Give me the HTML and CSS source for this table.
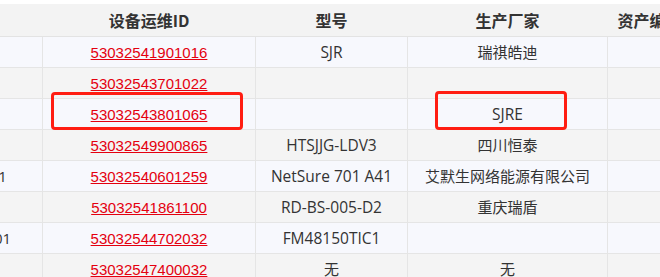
FILE: index.html
```html
<!DOCTYPE html>
<html lang="zh-CN">
<head>
<meta charset="utf-8">
<title>设备列表</title>
<link rel="stylesheet" href="styles.css">
</head>
<body>
<div class="view">
  <table class="grid">
    <colgroup>
      <col class="c0"><col class="c1"><col class="c2"><col class="c3"><col class="c4">
    </colgroup>
    <thead>
      <tr><th>设备名称</th><th>设备运维ID</th><th>型号</th><th>生产厂家</th><th>资产编号</th></tr>
    </thead>
    <tbody>
      <tr class="odd"><td></td><td><a href="#">53032541901016</a></td><td class="model">SJR</td><td>瑞祺皓迪</td><td></td></tr>
      <tr class="even"><td></td><td><a href="#">53032543701022</a></td><td class="model"></td><td></td><td></td></tr>
      <tr class="odd"><td></td><td><a href="#">53032543801065</a></td><td class="model"></td><td class="model">SJRE</td><td></td></tr>
      <tr class="even"><td></td><td><a href="#">53032549900865</a></td><td class="model">HTSJJG-LDV3</td><td>四川恒泰</td><td></td></tr>
      <tr class="odd"><td>通信开关电源1</td><td><a href="#">53032540601259</a></td><td class="model">NetSure 701 A41</td><td>艾默生网络能源有限公司</td><td></td></tr>
      <tr class="even"><td></td><td><a href="#">53032541861100</a></td><td class="model">RD-BS-005-D2</td><td>重庆瑞盾</td><td></td></tr>
      <tr class="odd"><td>通信开关电源01</td><td><a href="#">53032544702032</a></td><td class="model">FM48150TIC1</td><td></td><td></td></tr>
      <tr class="even"><td></td><td><a href="#">53032547400032</a></td><td>无</td><td>无</td><td></td></tr>
    </tbody>
  </table>
  <div class="mark mark-id"></div>
  <div class="mark mark-maker"></div>
</div>
</body>
</html>
```
FILE: styles.css
```css
html, body {
  margin: 0;
  padding: 0;
  background: #ffffff;
}
.view {
  position: relative;
  width: 660px;
  height: 277px;
  overflow: hidden;
  padding-top: 4px;
  box-sizing: border-box;
  font-family: "Open Sans", "Noto Sans CJK SC", sans-serif;
  font-size: 15px;
  color: #333333;
}
.grid {
  margin-left: -128px;
  border-collapse: collapse;
  table-layout: fixed;
  width: 819px;
}
.c0 { width: 170px; }
.c1 { width: 213px; }
.c2 { width: 152px; }
.c3 { width: 200px; }
.c4 { width: 84px; }
.grid th {
  height: 32px;
  padding: 0;
  background: #f3f3f3;
  font-family: "Noto Sans CJK SC", sans-serif;
  font-size: 16px;
  font-weight: 700;
  color: #333333;
  text-align: center;
  white-space: nowrap;
  border-bottom: 1px solid #e3e3e3;
  line-height: 20px;
  vertical-align: middle;
}
.grid td {
  height: 31px;
  box-sizing: border-box;
  padding: 0;
  text-align: center;
  white-space: nowrap;
  border: 1px solid #e5e5e5;
  line-height: 18px;
  vertical-align: middle;
}
.grid td.model {
  font-size: 15.5px;
}
.grid tr.odd td { background: #f7f8fd; }
.grid tr.even td { background: #f4f4f4; }
.grid a {
  font-family: "Liberation Sans", Arial, sans-serif;
  color: #e4000f;
  text-decoration: underline;
}
.mark {
  position: absolute;
  border: 3px solid #ff1d12;
  border-radius: 4px;
  box-sizing: border-box;
}
.mark-id {
  left: 51px;
  top: 92px;
  width: 192px;
  height: 38px;
}
.mark-maker {
  left: 435px;
  top: 91px;
  width: 132px;
  height: 39px;
}
```
